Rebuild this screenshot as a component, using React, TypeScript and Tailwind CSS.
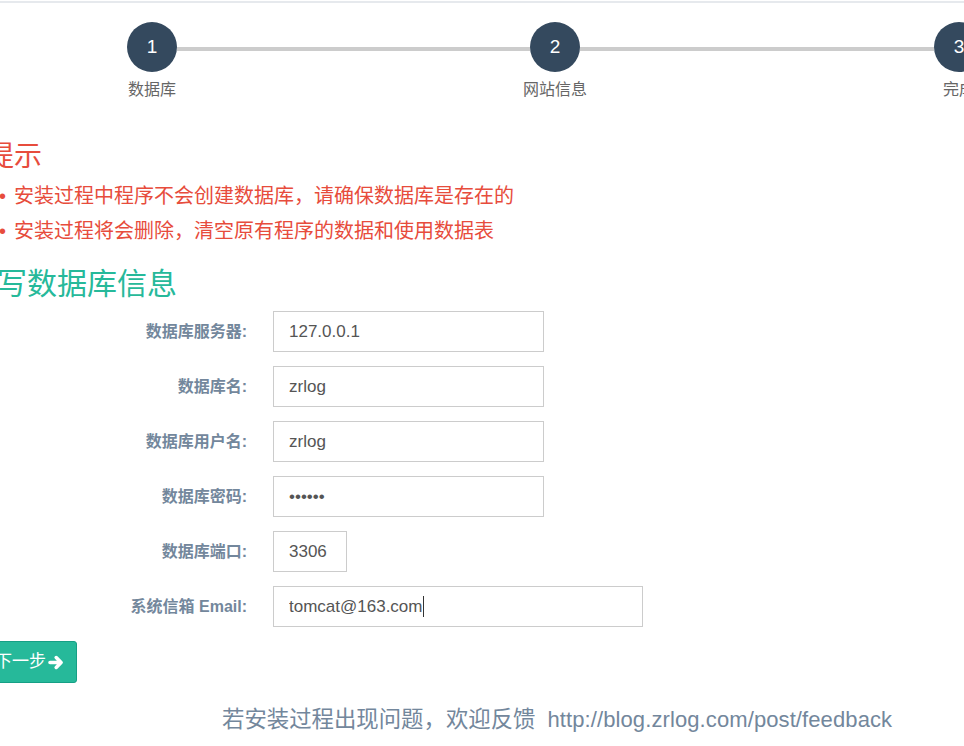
import React from 'react';

const steps = [
    { n: 1, label: '数据库' },
    { n: 2, label: '网站信息' },
    { n: 3, label: '完成' },
];

const fields = [
    { label: '数据库服务器:', value: '127.0.0.1', width: 'w-[271px]', type: 'text' },
    { label: '数据库名:', value: 'zrlog', width: 'w-[271px]', type: 'text' },
    { label: '数据库用户名:', value: 'zrlog', width: 'w-[271px]', type: 'text' },
    { label: '数据库密码:', value: '123456', width: 'w-[271px]', type: 'password' },
    { label: '数据库端口:', value: '3306', width: 'w-[74px]', type: 'text' },
    { label: '系统信箱 Email:', value: 'tomcat@163.com', width: 'w-[370px]', type: 'text', caret: true },
];

function Step({ n, label }: { n: number; label: string }) {
    return (
        <div className="flex w-[50px] shrink-0 flex-col items-center">
            <div className="flex h-[50px] w-[50px] items-center justify-center rounded-full bg-[#34495E] text-[19px] text-white">
                {n}
            </div>
            <div className="mt-[8px] whitespace-nowrap text-[16px] leading-[20px] text-[#666]">{label}</div>
        </div>
    );
}

function ArrowRight() {
    return (
        <svg width="16" height="15" viewBox="0 0 16 15" fill="none">
            <path
                d="M2 7.5h10.5M8.2 2.6l4.9 4.9-4.9 4.9"
                stroke="white"
                strokeWidth="3.6"
                strokeLinecap="round"
                strokeLinejoin="round"
            />
        </svg>
    );
}

export default function App() {
    return (
        <div className="relative h-[746px] w-[964px] overflow-hidden bg-white font-['Liberation_Sans','Noto_Sans_CJK_SC',sans-serif]">
            {/* top rule */}
            <div className="mt-[1px] h-[2px] bg-[#e6e9ed]" />

            {/* wizard steps */}
            <div className="mt-[19px] ml-[127px] flex items-start">
                <Step {...steps[0]} />
                <div className="mt-[25px] h-[4px] w-[353px] shrink-0 bg-[#ccc]" />
                <Step {...steps[1]} />
                <div className="mt-[25px] h-[4px] w-[354px] shrink-0 bg-[#ccc]" />
                <Step {...steps[2]} />
            </div>

            {/* notice */}
            <h3 className="mt-[39px] -ml-[14px] whitespace-nowrap text-[28px] leading-[36px] text-[#E74C3C]">提示</h3>
            <ul className="mt-[4px] text-[20px] leading-[35px] text-[#E74C3C]">
                <li className="flex whitespace-nowrap">
                    <span className="w-[15px] shrink-0 -ml-[1px]">•</span>
                    安装过程中程序不会创建数据库，请确保数据库是存在的
                </li>
                <li className="flex whitespace-nowrap">
                    <span className="w-[15px] shrink-0 -ml-[1px]">•</span>
                    安装过程将会删除，清空原有程序的数据和使用数据表
                </li>
            </ul>

            <h3 className="mt-[15px] -ml-[3px] whitespace-nowrap text-[30px] leading-[40px] text-[#26B99A]">写数据库信息</h3>

            {/* form */}
            <div className="mt-[7px] flex flex-col gap-[14px]">
                {fields.map((f) => (
                    <div key={f.label} className="flex items-center">
                        <label className="w-[247px] shrink-0 whitespace-nowrap text-right text-[16px] font-bold text-[#73879C]">
                            {f.label}
                        </label>
                        <div className="relative ml-[26px]">
                            <input
                                type={f.type}
                                defaultValue={f.value}
                                readOnly
                                className={`${f.width} h-[41px] border border-[#ccc] bg-white px-[15px] text-[17px] text-[#555] outline-none`}
                            />
                            {f.caret && <span className="absolute left-[150px] top-[10px] h-[21px] w-px bg-[#333]" />}
                        </div>
                    </div>
                ))}
            </div>

            <button className="mt-[14px] -ml-[18px] flex h-[42px] items-center gap-[2px] rounded-[3px] border border-[#169F85] bg-[#26B99A] pl-[12px] pr-[12px] text-[17px] text-white">
                下一步
                <ArrowRight />
            </button>

            <p className="mt-[22px] ml-[222px] flex items-baseline whitespace-nowrap text-[22px] leading-[30px] text-[#73879C]">
                <span className="text-[22.4px]">若安装过程出现问题，欢迎反馈</span>
                <span className="ml-[12px] tracking-[0.1px]">http://blog.zrlog.com/post/feedback</span>
            </p>
        </div>
    );
}
